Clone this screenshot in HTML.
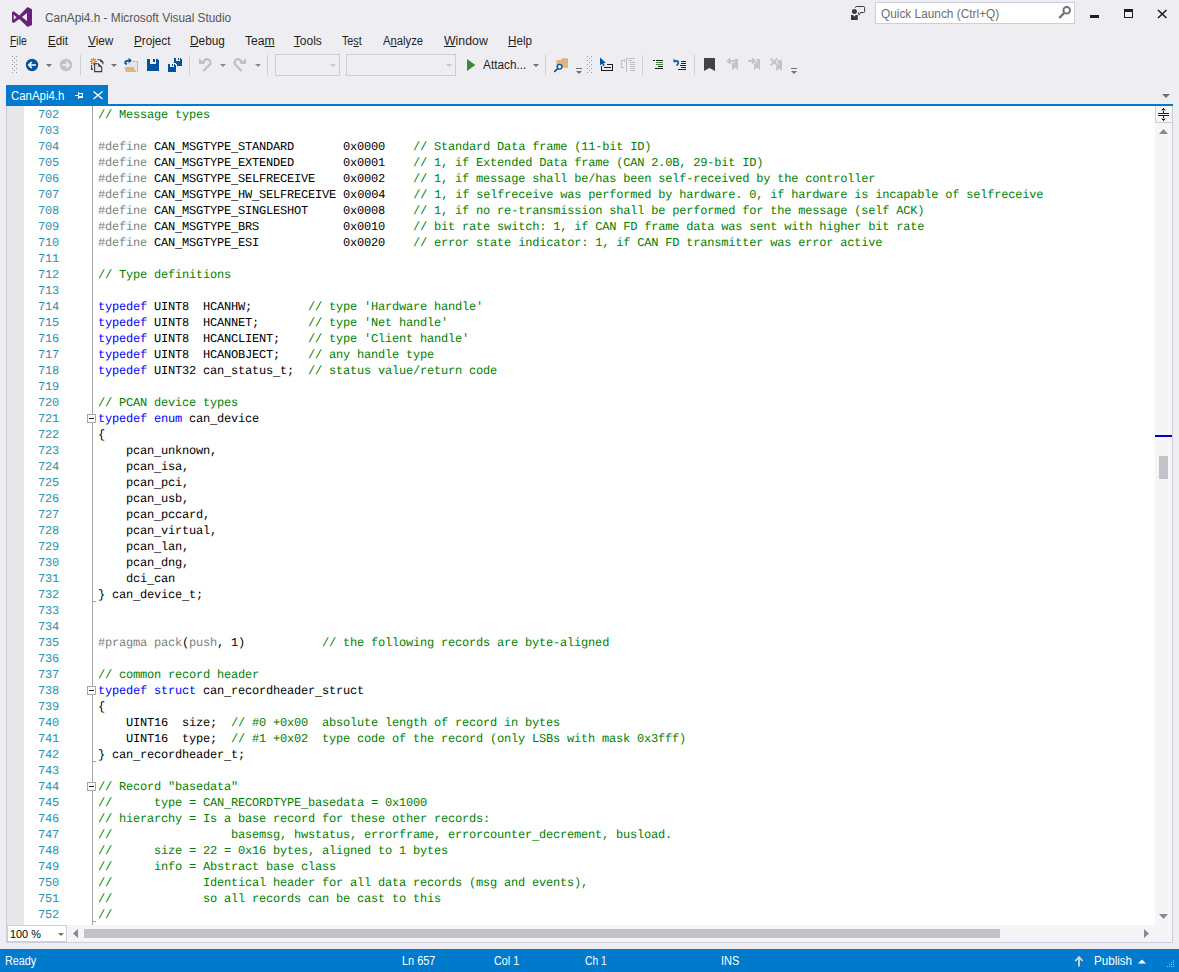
<!DOCTYPE html>
<html lang="en"><head><meta charset="utf-8"><title>CanApi4.h - Microsoft Visual Studio</title>
<style>
*{margin:0;padding:0;box-sizing:border-box}
html,body{width:1179px;height:972px;overflow:hidden;background:#eeeef2}
body{position:relative;font-family:"Liberation Sans",sans-serif;font-size:12px;color:#1e1e1e}
.t{position:absolute;white-space:pre;line-height:20px;height:20px;transform-origin:0 0}
.t u{text-decoration:underline;text-underline-offset:1px;text-decoration-thickness:1px}
.a{position:absolute}
#ed{position:absolute;left:7px;top:106px;width:1148px;height:819px;background:#fff;overflow:hidden}
.ln,.cl{position:absolute;white-space:pre;font-family:"Liberation Mono",monospace;font-size:12px;letter-spacing:-0.2px;text-rendering:geometricPrecision;line-height:16px;height:16px}
.ln{color:#2b91af;left:31px}
.cl{color:#000;left:91px}
.cl i{font-style:normal;text-rendering:auto;position:relative;top:1px}
.c{color:#008000}.k{color:#0000ff}.p{color:#808080}
svg{position:absolute;overflow:visible}
</style></head><body>

<div class="t" style="left:44.70px;top:7.84px;font-size:12px;transform:scaleX(0.9873);color:#555;">CanApi4.h - Microsoft Visual Studio</div>
<div class="a" style="left:875px;top:2px;width:200px;height:22px;background:#fff;border:1px solid #ccceDB"></div>
<div class="t" style="left:880.80px;top:3.84px;font-size:12px;transform:scaleX(0.9875);color:#6d6d6d;">Quick Launch (Ctrl+Q)</div>
<div class="t" style="left:10.00px;top:30.84px;font-size:12px;transform:scaleX(0.8650);color:#1e1e1e;"><u>F</u>ile</div>
<div class="t" style="left:48.20px;top:30.84px;font-size:12px;transform:scaleX(0.9619);color:#1e1e1e;"><u>E</u>dit</div>
<div class="t" style="left:87.90px;top:30.84px;font-size:12px;transform:scaleX(0.9846);color:#1e1e1e;"><u>V</u>iew</div>
<div class="t" style="left:133.50px;top:30.84px;font-size:12px;transform:scaleX(0.9737);color:#1e1e1e;"><u>P</u>roject</div>
<div class="t" style="left:190.00px;top:30.84px;font-size:12px;transform:scaleX(0.9857);color:#1e1e1e;"><u>D</u>ebug</div>
<div class="t" style="left:245.00px;top:30.84px;font-size:12px;transform:scaleX(1.0103);color:#1e1e1e;">Tea<u>m</u></div>
<div class="t" style="left:293.80px;top:30.84px;font-size:12px;transform:scaleX(1.0000);color:#1e1e1e;"><u>T</u>ools</div>
<div class="t" style="left:342.40px;top:30.84px;font-size:12px;transform:scaleX(0.8957);color:#1e1e1e;">Te<u>s</u>t</div>
<div class="t" style="left:382.80px;top:30.84px;font-size:12px;transform:scaleX(0.9395);color:#1e1e1e;">A<u>n</u>alyze</div>
<div class="t" style="left:443.90px;top:30.84px;font-size:12px;transform:scaleX(1.0256);color:#1e1e1e;"><u>W</u>indow</div>
<div class="t" style="left:508.20px;top:30.84px;font-size:12px;transform:scaleX(0.9720);color:#1e1e1e;"><u>H</u>elp</div>
<div class="a" style="left:275px;top:54px;width:65px;height:22px;border:1px solid #ccceDB"></div>
<div class="a" style="left:346px;top:54px;width:110px;height:22px;border:1px solid #ccceDB"></div>
<div class="t" style="left:483.20px;top:54.84px;font-size:12px;transform:scaleX(0.9841);color:#1e1e1e;">Attach...</div>
<div class="a" style="left:6px;top:85px;width:102px;height:19px;background:#007acc"></div>
<div class="a" style="left:6px;top:104px;width:1167px;height:2px;background:#007acc"></div>
<div class="t" style="left:10.70px;top:85.84px;font-size:12px;transform:scaleX(0.9518);color:#fff;">CanApi4.h</div>
<div class="a" style="left:6px;top:106px;width:1167px;height:837px;background:#f5f5f5;border:1px solid #ccceDB;border-top:0"></div>
<div class="a" style="left:7px;top:925px;width:60px;height:17px;background:#fff;border:1px solid #ccceDB"></div>
<div id="ed">
<div class="a" style="left:0;top:0;width:17px;height:819px;background:#e6e7e8"></div>
<div class="a" style="left:85px;top:0;width:1px;height:819px;background:#a5a5a5"></div>
<div class="a" style="left:80px;top:308px;width:9px;height:9px;background:#fff;border:1px solid #a5a5a5"></div><div class="a" style="left:82px;top:312px;width:5px;height:1px;background:#1e1e1e"></div>
<div class="a" style="left:80px;top:580px;width:9px;height:9px;background:#fff;border:1px solid #a5a5a5"></div><div class="a" style="left:82px;top:584px;width:5px;height:1px;background:#1e1e1e"></div>
<div class="a" style="left:80px;top:676px;width:9px;height:9px;background:#fff;border:1px solid #a5a5a5"></div><div class="a" style="left:82px;top:680px;width:5px;height:1px;background:#1e1e1e"></div>
<div class="a" style="left:86px;top:495px;width:3px;height:1px;background:#a5a5a5"></div>
<div class="a" style="left:86px;top:655px;width:3px;height:1px;background:#a5a5a5"></div>
<div class="a" style="left:86px;top:815px;width:3px;height:1px;background:#a5a5a5"></div>
<div class="ln" style="top:1px">702</div>
<div class="cl" style="top:1px"><span class="c">// Message types</span></div>
<div class="ln" style="top:17px">703</div>
<div class="ln" style="top:33px">704</div>
<div class="cl" style="top:33px"><span class="p">#define</span> CAN<i>_</i>MSGTYPE<i>_</i>STANDARD       0x0000    <span class="c">// Standard Data frame (11-bit ID)</span></div>
<div class="ln" style="top:49px">705</div>
<div class="cl" style="top:49px"><span class="p">#define</span> CAN<i>_</i>MSGTYPE<i>_</i>EXTENDED       0x0001    <span class="c">// 1, if Extended Data frame (CAN 2.0B, 29-bit ID)</span></div>
<div class="ln" style="top:65px">706</div>
<div class="cl" style="top:65px"><span class="p">#define</span> CAN<i>_</i>MSGTYPE<i>_</i>SELFRECEIVE    0x0002    <span class="c">// 1, if message shall be/has been self-received by the controller</span></div>
<div class="ln" style="top:81px">707</div>
<div class="cl" style="top:81px"><span class="p">#define</span> CAN<i>_</i>MSGTYPE<i>_</i>HW<i>_</i>SELFRECEIVE 0x0004    <span class="c">// 1, if selfreceive was performed by hardware. 0, if hardware is incapable of selfreceive</span></div>
<div class="ln" style="top:97px">708</div>
<div class="cl" style="top:97px"><span class="p">#define</span> CAN<i>_</i>MSGTYPE<i>_</i>SINGLESHOT     0x0008    <span class="c">// 1, if no re-transmission shall be performed for the message (self ACK)</span></div>
<div class="ln" style="top:113px">709</div>
<div class="cl" style="top:113px"><span class="p">#define</span> CAN<i>_</i>MSGTYPE<i>_</i>BRS            0x0010    <span class="c">// bit rate switch: 1, if CAN FD frame data was sent with higher bit rate</span></div>
<div class="ln" style="top:129px">710</div>
<div class="cl" style="top:129px"><span class="p">#define</span> CAN<i>_</i>MSGTYPE<i>_</i>ESI            0x0020    <span class="c">// error state indicator: 1, if CAN FD transmitter was error active</span></div>
<div class="ln" style="top:145px">711</div>
<div class="ln" style="top:161px">712</div>
<div class="cl" style="top:161px"><span class="c">// Type definitions</span></div>
<div class="ln" style="top:177px">713</div>
<div class="ln" style="top:193px">714</div>
<div class="cl" style="top:193px"><span class="k">typedef</span> UINT8  HCANHW;        <span class="c">// type 'Hardware handle'</span></div>
<div class="ln" style="top:209px">715</div>
<div class="cl" style="top:209px"><span class="k">typedef</span> UINT8  HCANNET;       <span class="c">// type 'Net handle'</span></div>
<div class="ln" style="top:225px">716</div>
<div class="cl" style="top:225px"><span class="k">typedef</span> UINT8  HCANCLIENT;    <span class="c">// type 'Client handle'</span></div>
<div class="ln" style="top:241px">717</div>
<div class="cl" style="top:241px"><span class="k">typedef</span> UINT8  HCANOBJECT;    <span class="c">// any handle type</span></div>
<div class="ln" style="top:257px">718</div>
<div class="cl" style="top:257px"><span class="k">typedef</span> UINT32 can<i>_</i>status<i>_</i>t;  <span class="c">// status value/return code</span></div>
<div class="ln" style="top:273px">719</div>
<div class="ln" style="top:289px">720</div>
<div class="cl" style="top:289px"><span class="c">// PCAN device types</span></div>
<div class="ln" style="top:305px">721</div>
<div class="cl" style="top:305px"><span class="k">typedef enum</span> can<i>_</i>device</div>
<div class="ln" style="top:321px">722</div>
<div class="cl" style="top:321px">{</div>
<div class="ln" style="top:337px">723</div>
<div class="cl" style="top:337px">    pcan<i>_</i>unknown,</div>
<div class="ln" style="top:353px">724</div>
<div class="cl" style="top:353px">    pcan<i>_</i>isa,</div>
<div class="ln" style="top:369px">725</div>
<div class="cl" style="top:369px">    pcan<i>_</i>pci,</div>
<div class="ln" style="top:385px">726</div>
<div class="cl" style="top:385px">    pcan<i>_</i>usb,</div>
<div class="ln" style="top:401px">727</div>
<div class="cl" style="top:401px">    pcan<i>_</i>pccard,</div>
<div class="ln" style="top:417px">728</div>
<div class="cl" style="top:417px">    pcan<i>_</i>virtual,</div>
<div class="ln" style="top:433px">729</div>
<div class="cl" style="top:433px">    pcan<i>_</i>lan,</div>
<div class="ln" style="top:449px">730</div>
<div class="cl" style="top:449px">    pcan<i>_</i>dng,</div>
<div class="ln" style="top:465px">731</div>
<div class="cl" style="top:465px">    dci<i>_</i>can</div>
<div class="ln" style="top:481px">732</div>
<div class="cl" style="top:481px">} can<i>_</i>device<i>_</i>t;</div>
<div class="ln" style="top:497px">733</div>
<div class="ln" style="top:513px">734</div>
<div class="ln" style="top:529px">735</div>
<div class="cl" style="top:529px"><span class="p">#pragma pack</span>(<span class="p">push</span>, 1)           <span class="c">// the following records are byte-aligned</span></div>
<div class="ln" style="top:545px">736</div>
<div class="ln" style="top:561px">737</div>
<div class="cl" style="top:561px"><span class="c">// common record header</span></div>
<div class="ln" style="top:577px">738</div>
<div class="cl" style="top:577px"><span class="k">typedef struct</span> can<i>_</i>recordheader<i>_</i>struct</div>
<div class="ln" style="top:593px">739</div>
<div class="cl" style="top:593px">{</div>
<div class="ln" style="top:609px">740</div>
<div class="cl" style="top:609px">    UINT16  size;  <span class="c">// #0 +0x00  absolute length of record in bytes</span></div>
<div class="ln" style="top:625px">741</div>
<div class="cl" style="top:625px">    UINT16  type;  <span class="c">// #1 +0x02  type code of the record (only LSBs with mask 0x3fff)</span></div>
<div class="ln" style="top:641px">742</div>
<div class="cl" style="top:641px">} can<i>_</i>recordheader<i>_</i>t;</div>
<div class="ln" style="top:657px">743</div>
<div class="ln" style="top:673px">744</div>
<div class="cl" style="top:673px"><span class="c">// Record "basedata"</span></div>
<div class="ln" style="top:689px">745</div>
<div class="cl" style="top:689px"><span class="c">//      type = CAN<i>_</i>RECORDTYPE<i>_</i>basedata = 0x1000</span></div>
<div class="ln" style="top:705px">746</div>
<div class="cl" style="top:705px"><span class="c">// hierarchy = Is a base record for these other records:</span></div>
<div class="ln" style="top:721px">747</div>
<div class="cl" style="top:721px"><span class="c">//                 basemsg, hwstatus, errorframe, errorcounter<i>_</i>decrement, busload.</span></div>
<div class="ln" style="top:737px">748</div>
<div class="cl" style="top:737px"><span class="c">//      size = 22 = 0x16 bytes, aligned to 1 bytes</span></div>
<div class="ln" style="top:753px">749</div>
<div class="cl" style="top:753px"><span class="c">//      info = Abstract base class</span></div>
<div class="ln" style="top:769px">750</div>
<div class="cl" style="top:769px"><span class="c">//             Identical header for all data records (msg and events),</span></div>
<div class="ln" style="top:785px">751</div>
<div class="cl" style="top:785px"><span class="c">//             so all records can be cast to this</span></div>
<div class="ln" style="top:801px">752</div>
<div class="cl" style="top:801px"><span class="c">//</span></div>
</div>
<div class="t" style="left:9.60px;top:924.19px;font-size:11px;transform:scaleX(0.9871);color:#000;">100 %</div>
<div class="a" style="left:0;top:949px;width:1179px;height:23px;background:#007acc"></div>
<div class="t" style="left:4.60px;top:950.84px;font-size:12px;transform:scaleX(0.9000);color:#fff;">Ready</div>
<div class="t" style="left:401.60px;top:950.84px;font-size:12px;transform:scaleX(0.9081);color:#fff;">Ln 657</div>
<div class="t" style="left:493.80px;top:950.84px;font-size:12px;transform:scaleX(0.8964);color:#fff;">Col 1</div>
<div class="t" style="left:585.40px;top:950.84px;font-size:12px;transform:scaleX(0.8577);color:#fff;">Ch 1</div>
<div class="t" style="left:721.30px;top:950.84px;font-size:12px;transform:scaleX(0.9150);color:#fff;">INS</div>
<div class="t" style="left:1093.60px;top:950.84px;font-size:12px;transform:scaleX(0.9667);color:#fff;">Publish</div>
<svg style="left:0;top:0" width="1179" height="972" viewBox="0 0 1179 972">
<path fill="#68217a" fill-rule="evenodd" d="M12,12.3 L13.7,11.2 L19.3,15.4 L27.5,6.9 L32,9.2 L32,24.9 L27.5,27 L19.3,18.9 L13.7,22.9 L12,22 Z M27,13 L27,21.1 L21.9,17 Z M13.7,14.8 L13.7,19.8 L16.5,17.3 Z"/>
<g fill="#3a3a3a"><circle cx="854.4" cy="11.4" r="2.5"/><path d="M851,15 h2.2 l1.2,1.8 l1.2,-1.8 h2.2 v5 h-6.8 z"/></g>
<path fill="none" stroke="#3a3a3a" stroke-width="1" d="M855.6,8 v-0.5 q0,-1 1,-1 h7 q1,0 1,1 v4 q0,1 -1,1 h-3.2 l-1.2,2.6 l-0.9,-2.8"/>
<g stroke="#717171" fill="none"><circle cx="1066.7" cy="10.3" r="3.3" stroke-width="1.9"/><path d="M1064.2,13 l-5,5" stroke-width="2.4"/></g>
<g fill="#1e1e1e" shape-rendering="crispEdges"><rect x="1090" y="15" width="9" height="3"/>
<rect x="1124" y="9" width="9" height="3"/><rect x="1124" y="9" width="1" height="9"/><rect x="1132" y="9" width="1" height="9"/><rect x="1124" y="17" width="9" height="1"/></g>
<path stroke="#1e1e1e" stroke-width="1.6" fill="none" d="M1158,10 l8.5,8 M1166.5,10 l-8.5,8"/>
<g fill="#999" shape-rendering="crispEdges"><rect x="12" y="56" width="1" height="1"/><rect x="16" y="56" width="1" height="1"/><rect x="14" y="58" width="1" height="1"/><rect x="12" y="60" width="1" height="1"/><rect x="16" y="60" width="1" height="1"/><rect x="14" y="62" width="1" height="1"/><rect x="12" y="64" width="1" height="1"/><rect x="16" y="64" width="1" height="1"/><rect x="14" y="66" width="1" height="1"/><rect x="12" y="68" width="1" height="1"/><rect x="16" y="68" width="1" height="1"/><rect x="14" y="70" width="1" height="1"/><rect x="12" y="72" width="1" height="1"/><rect x="16" y="72" width="1" height="1"/></g>
<circle cx="32" cy="65" r="6.2" fill="#00539c"/><path fill="none" stroke="#fff" stroke-width="1.7" d="M36,65 h-7 M31.8,62 l-3,3 l3,3"/>
<path fill="#717171" d="M46,64 h6 l-3,3 z"/>
<circle cx="66" cy="65" r="6.2" fill="#c2c2c2"/><path fill="none" stroke="#eeeef2" stroke-width="1.7" d="M62,65 h7 M66.2,62 l3,3 l-3,3"/>
<rect x="80" y="55" width="1" height="20" fill="#ccceDB" shape-rendering="crispEdges"/>
<g stroke="#c27d1a" stroke-width="1.1" fill="none"><path d="M93.5,58 v7 M90,61.5 h7 M91,59 l5,5 M96,59 l-5,5"/></g><circle cx="93.5" cy="61.5" r="1.1" fill="#fff"/>
<g fill="none" stroke="#3a3a3a" stroke-width="1.1"><path d="M97.5,59.7 h3 l2.4,2.4 v2.2"/><path d="M91.6,65 v4.4 h1.4"/><path fill="#e8e8ec" d="M94.6,63.8 h3.6 l3.5,3.5 v4.3 h-7.1 z"/></g>
<path fill="#3a3a3a" d="M100.4,59.4 l2.8,2.8 h-2.8 z M98.4,63.5 l3.3,3.3 h-3.3 z"/>
<path fill="#717171" d="M111,64 h6 l-3,3 z"/>
<path fill="none" stroke="#dcb67a" stroke-width="1.2" d="M132.3,61.5 h5.1 v10.3"/><path fill="#e6e6ea" d="M128,62 h9 v6 h-9z"/><path fill="#dcb67a" d="M124.5,67 h9 l3,4.9 h-10.8 z"/>
<path fill="none" stroke="#00539c" stroke-width="1.7" d="M127,64.3 q-2.6,-0.8 -1.7,-2.6 q1,-1.3 4.5,-1.1"/><path fill="#00539c" d="M128.6,57.8 l3.2,2.8 l-3.2,2.8 z"/>
<g shape-rendering="crispEdges"><path fill="#00539c" d="M147,59 h10 l2,2 v10 h-12 z"/><rect x="150" y="59" width="6" height="5" fill="#eeeef2"/><rect x="153" y="59" width="2" height="3" fill="#00539c"/></g>
<g shape-rendering="crispEdges"><path fill="#00539c" d="M174,58 h6.5 l1.5,1.5 v6.5 h-8 z"/><rect x="176" y="58" width="4" height="3" fill="#eeeef2"/><rect x="178" y="58" width="1" height="2" fill="#00539c"/>
<path fill="#eeeef2" d="M167,63 h8.8 l1.2,1.2 v8.8 h-10 z"/><path fill="#00539c" d="M168,64 h6.5 l1.5,1.5 v6.5 h-8 z"/><rect x="170" y="64" width="4" height="3" fill="#eeeef2"/><rect x="172" y="64" width="1" height="2" fill="#00539c"/></g>
<rect x="189" y="55" width="1" height="20" fill="#ccceDB" shape-rendering="crispEdges"/>
<g fill="none" stroke="#c0c0c0" stroke-width="2.3"><path d="M203.4,71 L209.4,65 A3.4,3.4 0 1 0 203.65,63.2"/><path d="M241.6,71 L235.6,65 A3.4,3.4 0 1 1 241.35,63.2"/></g>
<path fill="#c0c0c0" d="M199,58 v6 h6 z M246,58 v6 h-6 z"/>
<path fill="#8a8a8a" d="M220,64 h6 l-3,3 z"/>
<path fill="#8a8a8a" d="M255,64 h6 l-3,3 z"/>
<rect x="267" y="55" width="1" height="20" fill="#ccceDB" shape-rendering="crispEdges"/>
<path fill="#c4c6d4" d="M330,64 h6 l-3,3 z"/>
<path fill="#c4c6d4" d="M446,64 h6 l-3,3 z"/>
<path fill="#388a34" d="M467,59 v12 l8.3,-6 z"/>
<path fill="#717171" d="M533,64 h6 l-3,3 z"/>
<rect x="545" y="55" width="1" height="20" fill="#ccceDB" shape-rendering="crispEdges"/>
<path fill="#dcb67a" d="M556.5,60 h4.5 l1,-1.8 h6 v9.5 h-11.5 z"/><circle cx="559.6" cy="66.8" r="2.4" fill="#eeeef2" stroke="#00539c" stroke-width="1.3"/><path stroke="#00539c" stroke-width="1.8" d="M557.8,68.6 l-3.6,3.2"/>
<rect x="576" y="68" width="6" height="1" fill="#717171" shape-rendering="crispEdges"/><path fill="#717171" d="M576,71 h6 l-3,3 z"/>
<g fill="#999" shape-rendering="crispEdges"><rect x="587" y="56" width="1" height="1"/><rect x="591" y="56" width="1" height="1"/><rect x="589" y="58" width="1" height="1"/><rect x="587" y="60" width="1" height="1"/><rect x="591" y="60" width="1" height="1"/><rect x="589" y="62" width="1" height="1"/><rect x="587" y="64" width="1" height="1"/><rect x="591" y="64" width="1" height="1"/><rect x="589" y="66" width="1" height="1"/><rect x="587" y="68" width="1" height="1"/><rect x="591" y="68" width="1" height="1"/><rect x="589" y="70" width="1" height="1"/><rect x="587" y="72" width="1" height="1"/><rect x="591" y="72" width="1" height="1"/></g>
<path fill="#00539c" d="M600,57.5 v8 l2,-1.8 l1.3,2.6 l1.4,-0.7 l-1.3,-2.5 l2.6,-0.2 z"/><g shape-rendering="crispEdges"><path fill="none" stroke="#1e1e1e" stroke-width="1" d="M601.5,66 v4.5 h11 v-6 h-6"/><rect x="604" y="67" width="7" height="1" fill="#1e1e1e"/></g>
<g fill="#c0c0c0" shape-rendering="crispEdges"><rect x="626" y="58" width="1" height="14"/><rect x="626" y="58" width="9" height="1"/><rect x="628" y="60" width="4" height="1"/><rect x="630" y="62" width="5" height="1"/><rect x="630" y="64" width="5" height="1"/><rect x="630" y="66" width="5" height="1"/><rect x="630" y="68" width="5" height="1"/><rect x="630" y="70" width="5" height="1"/><rect x="621" y="60" width="1" height="8"/><rect x="621" y="60" width="3" height="1"/><rect x="621" y="67" width="3" height="1"/><rect x="624" y="59" width="1" height="3"/></g>
<rect x="642" y="55" width="1" height="20" fill="#ccceDB" shape-rendering="crispEdges"/>
<g shape-rendering="crispEdges"><rect x="653" y="60" width="2" height="1" fill="#1e1e1e"/><rect x="656" y="60" width="7" height="1" fill="#1e1e1e"/><rect x="656" y="62" width="7" height="1" fill="#388a34"/><rect x="656" y="64" width="7" height="1" fill="#388a34"/><rect x="658" y="66" width="5" height="1" fill="#1e1e1e"/><rect x="655" y="68" width="8" height="1" fill="#1e1e1e"/></g>
<g shape-rendering="crispEdges" fill="#1e1e1e"><rect x="681" y="61" width="5" height="1"/><rect x="681" y="63" width="5" height="1"/><rect x="680" y="65" width="6" height="1"/><rect x="681" y="67" width="5" height="1"/><rect x="678" y="69" width="8" height="1"/></g>
<path fill="none" stroke="#00539c" stroke-width="1.5" d="M676.5,65.5 q2.6,-2.2 1.6,-4 q-1,-1.4 -2.6,-0.2"/><path fill="#00539c" d="M673.5,58.6 v3.6 h3.6 z"/>
<rect x="694" y="55" width="1" height="20" fill="#ccceDB" shape-rendering="crispEdges"/>
<path fill="#424242" d="M704,58 h11 v13 l-5.5,-3 l-5.5,3 z"/>
<g fill="#c4c4c4"><path d="M732,59 h6 v11 l-3,-2.5 l-3,2.5 z"/><path d="M754,59 h6 v11 l-3,-2.5 l-3,2.5 z"/><path d="M776,60 h6 v11 l-3,-2.5 l-3,2.5 z"/></g>
<g fill="none" stroke="#eeeef2" stroke-width="4"><path d="M734.5,61 h-6 M730.5,58.3 l-2.8,2.7 l2.8,2.7"/><path d="M748,61 h6 M752,58.3 l2.8,2.7 l-2.8,2.7"/><path d="M770.5,58.5 l7,7 M777.5,58.5 l-7,7"/></g>
<g fill="none" stroke="#c4c4c4" stroke-width="1.8"><path d="M734.5,61 h-6 M730.5,58.3 l-2.8,2.7 l2.8,2.7"/><path d="M748,61 h6 M752,58.3 l2.8,2.7 l-2.8,2.7"/><path d="M770.5,58.5 l7,7 M777.5,58.5 l-7,7"/></g>
<rect x="791" y="68" width="6" height="1" fill="#717171" shape-rendering="crispEdges"/><path fill="#717171" d="M791,71 h6 l-3,3 z"/>
<g fill="#fff" shape-rendering="crispEdges"><rect x="75" y="95" width="3" height="1"/><rect x="78" y="92" width="1" height="7"/><rect x="79" y="93" width="4" height="1"/><rect x="82" y="93" width="1" height="4"/><rect x="79" y="96" width="4" height="2"/></g>
<path stroke="#fff" stroke-width="1.4" fill="none" d="M93.5,91.5 l9,7.5 M102.5,91.5 l-9,7.5"/>
<path fill="#717171" d="M1162,94 h8 l-4,4 z"/>
<g shape-rendering="crispEdges"><rect x="1155" y="106" width="1" height="17" fill="#ccceDB"/><rect x="1155" y="122" width="17" height="1" fill="#ccceDB"/>
<g fill="#1e1e1e"><rect x="1158" y="113" width="11" height="1"/><rect x="1158" y="115" width="11" height="1"/><rect x="1163" y="108" width="1" height="5"/><rect x="1163" y="116" width="1" height="5"/><rect x="1162" y="109" width="3" height="1"/><rect x="1162" y="119" width="3" height="1"/></g>
<rect x="1161" y="110" width="5" height="1" fill="#b8b8b8"/><rect x="1161" y="118" width="5" height="1" fill="#b8b8b8"/>
<rect x="1155" y="435" width="17" height="2" fill="#0000cd"/><rect x="1159" y="456" width="9" height="23" fill="#c2c3c9"/>
<rect x="84" y="929" width="916" height="9" fill="#c2c3c9"/></g>
<g fill="#868999"><path d="M1159,134 h9 l-4.5,-5 z"/><path d="M1159,914 h9 l-4.5,5 z"/><path d="M78,929 v9 l-5,-4.5 z"/><path d="M1144,929 v9 l5,-4.5 z"/></g>
<path fill="#717171" d="M58,933 h6 l-3,3 z"/>
<path fill="none" stroke="#d8d8d8" stroke-width="1.8" d="M1079,966.5 v-9.5 M1075.3,961 l3.7,-4 l3.7,4"/>
<path fill="#fff" d="M1138,963.5 h8 l-4,-4 z"/>
<g fill="#8fc3ea" shape-rendering="crispEdges"><rect x="1173" y="960" width="1" height="1"/><rect x="1171" y="962" width="1" height="1"/><rect x="1173" y="962" width="1" height="1"/><rect x="1169" y="964" width="1" height="1"/><rect x="1171" y="964" width="1" height="1"/><rect x="1173" y="964" width="1" height="1"/><rect x="1167" y="966" width="1" height="1"/><rect x="1169" y="966" width="1" height="1"/><rect x="1171" y="966" width="1" height="1"/><rect x="1173" y="966" width="1" height="1"/></g>
</svg>
</body></html>
